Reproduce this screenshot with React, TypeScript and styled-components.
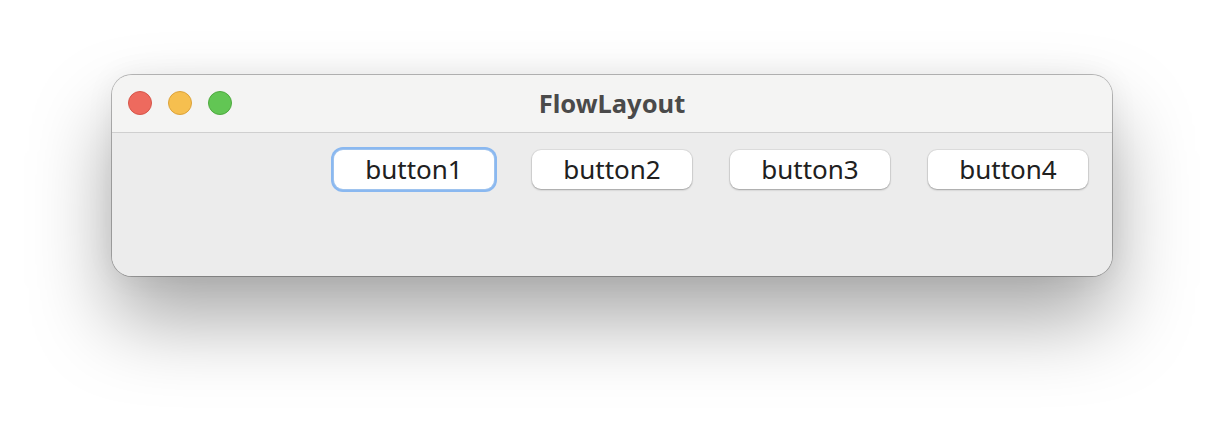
import React from "react";
import styled, { createGlobalStyle } from "styled-components";

const GlobalStyle = createGlobalStyle`
  html, body {
    margin: 0;
    padding: 0;
    background: #ffffff;
  }
  body {
    font-family: "Noto Sans", "Liberation Sans", sans-serif;
  }
`;

const Page = styled.div`
  width: 1224px;
  height: 424px;
  box-sizing: border-box;
  padding-top: 75px;
  display: flex;
  justify-content: center;
  align-items: flex-start;
  overflow: hidden;
`;

const Window = styled.div`
  width: 1000px;
  height: 201px;
  box-sizing: border-box;
  border-radius: 20px;
  overflow: hidden;
  display: flex;
  flex-direction: column;
  background: #ececec;
  box-shadow: 0 0 0 1px rgba(0, 0, 0, 0.26), 0 44px 80px rgba(0, 0, 0, 0.34),
    0 0 30px rgba(0, 0, 0, 0.06);
`;

const TitleBar = styled.div`
  position: relative;
  height: 57px;
  flex: none;
  display: flex;
  align-items: center;
  justify-content: center;
  background: #f4f4f3;
  border-bottom: 1px solid #cfcfcf;
`;

const Lights = styled.div`
  position: absolute;
  left: 16px;
  top: 16px;
  display: flex;
  gap: 16px;
`;

const Light = styled.span<{ $fill: string; $edge: string }>`
  width: 24px;
  height: 24px;
  box-sizing: border-box;
  border-radius: 50%;
  background: ${({ $fill }) => $fill};
  border: 1px solid ${({ $edge }) => $edge};
`;

const Title = styled.div`
  font-size: 25.5px;
  font-weight: 700;
  color: #4a4a4a;
  padding-bottom: 2px;
`;

const Content = styled.div`
  flex: 1;
  display: flex;
  justify-content: flex-end;
  align-items: flex-start;
  gap: 38px;
  padding: 17px 24px 0 0;
  background: #ececec;
`;

const Button = styled.button<{ $focused?: boolean }>`
  width: 160px;
  height: 39px;
  box-sizing: border-box;
  border: none;
  border-radius: 9px;
  background: #ffffff;
  font-family: "Noto Sans", "Liberation Sans", sans-serif;
  font-size: 26px;
  color: #202020;
  padding: 0 0 2px;
  box-shadow: ${({ $focused }) =>
    $focused
      ? "0 0 0 1px #9ec3ee, 0 0 0 3px #8ab8f0"
      : "0 0 0 1px rgba(0, 0, 0, 0.06), 0 1px 2px rgba(0, 0, 0, 0.28)"};
`;

const App = () => {
  return (
    <Page>
      <GlobalStyle />
      <Window>
        <TitleBar>
          <Lights>
            <Light $fill="#ee6a5e" $edge="#d65549" />
            <Light $fill="#f6bf4f" $edge="#dca23a" />
            <Light $fill="#62c654" $edge="#4ea93f" />
          </Lights>
          <Title>FlowLayout</Title>
        </TitleBar>
        <Content>
          <Button $focused>button1</Button>
          <Button>button2</Button>
          <Button>button3</Button>
          <Button>button4</Button>
        </Content>
      </Window>
    </Page>
  );
};

export default App;
